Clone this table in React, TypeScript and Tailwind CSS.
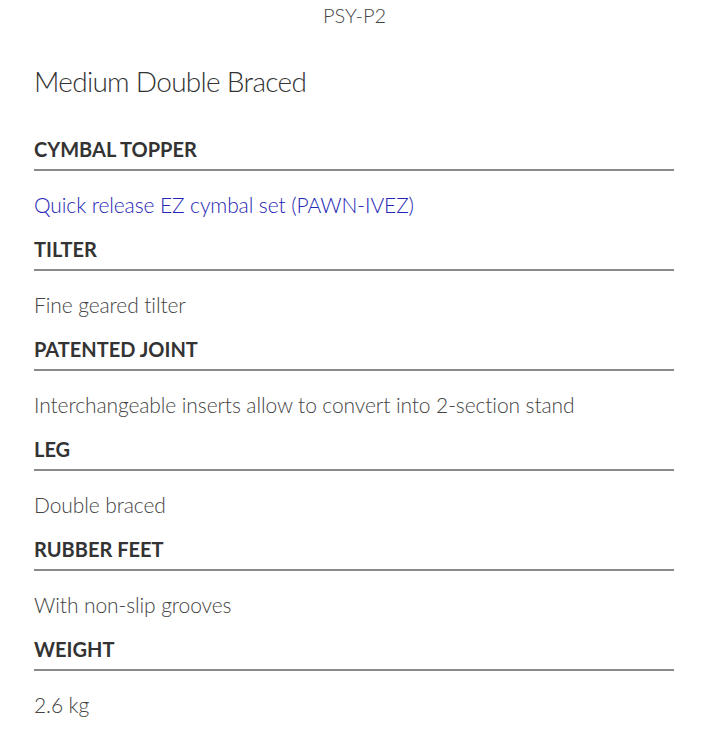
const specs = [
  { label: 'CYMBAL TOPPER', value: 'Quick release EZ cymbal set (PAWN-IVEZ)', link: true },
  { label: 'TILTER', value: 'Fine geared tilter' },
  { label: 'PATENTED JOINT', value: 'Interchangeable inserts allow to convert into 2-section stand' },
  { label: 'LEG', value: 'Double braced' },
  { label: 'RUBBER FEET', value: 'With non-slip grooves' },
  { label: 'WEIGHT', value: '2.6 kg' },
];

export default function App() {
  return (
    <div className="min-h-screen bg-white pt-[3px] font-['Lato',sans-serif]">
      <div className="text-center text-[20px] leading-6 font-light text-[#444]">PSY-P2</div>

      <div className="px-[34px]">
        <h1 className="mt-[37px] text-[28px] leading-[34px] font-light tracking-[-0.7px] text-[#333]">
          Medium Double Braced
        </h1>

        <div className="mt-[39px] w-[640px]">
          {specs.map((s, i) => (
            <div key={s.label} className={i > 0 ? 'mt-5' : ''}>
              <div className="border-b-2 border-[#8a8a8a] pb-2 text-[20px] leading-6 font-bold text-[#333]">
                {s.label}
              </div>
              <div
                className={`pt-[22px] text-[21px] leading-6 font-light tracking-[-0.1px] ${
                  s.link ? 'text-[#2626b4]' : 'text-[#444]'
                }`}
              >
                {s.value}
              </div>
            </div>
          ))}
        </div>
      </div>
    </div>
  );
}
